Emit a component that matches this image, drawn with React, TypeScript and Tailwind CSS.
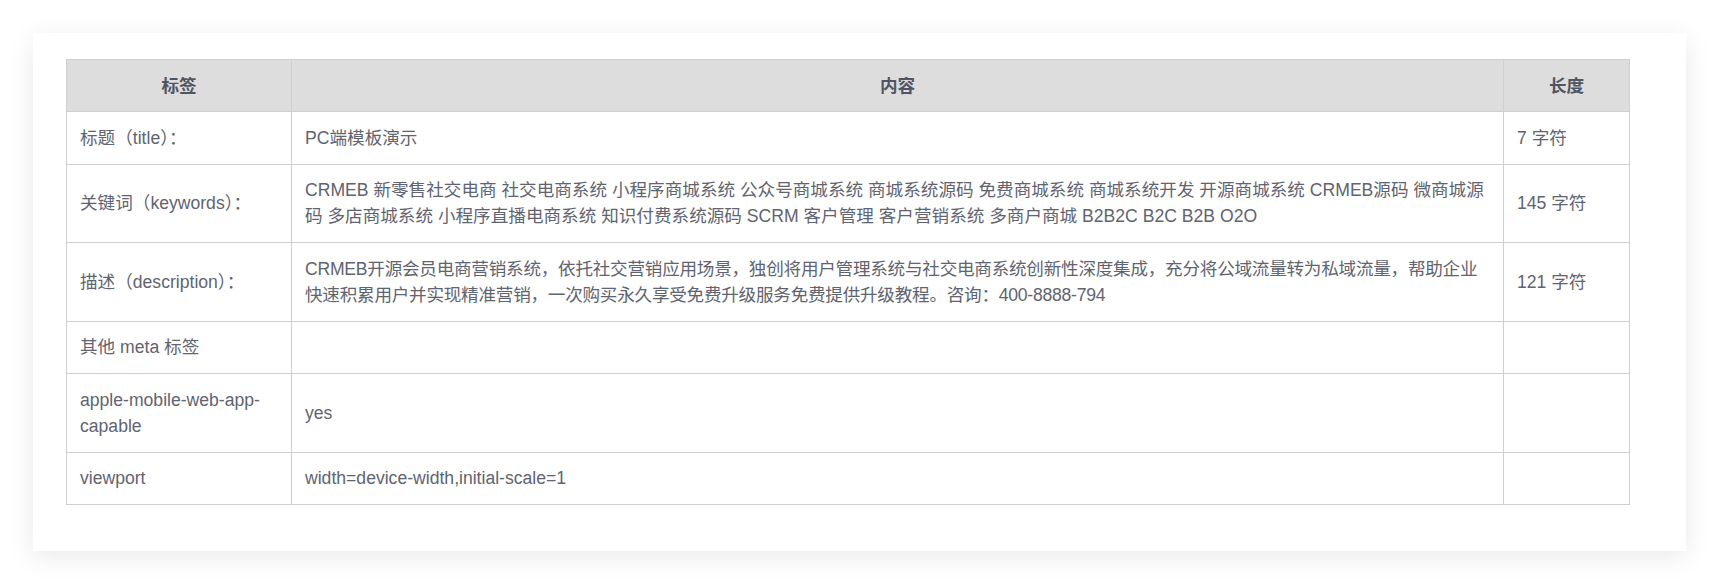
import React from "react";

type Row = { label: string; content: string; length: string; tight?: boolean };

const ROWS: Row[] = [
  { label: "标题（title）：", content: "PC端模板演示", length: "7 字符" },
  {
    label: "关键词（keywords）：",
    content:
      "CRMEB 新零售社交电商 社交电商系统 小程序商城系统 公众号商城系统 商城系统源码 免费商城系统 商城系统开发 开源商城系统 CRMEB源码 微商城源码 多店商城系统 小程序直播电商系统 知识付费系统源码 SCRM 客户管理 客户营销系统 多商户商城 B2B2C B2C B2B O2O",
    length: "145 字符",
  },
  {
    label: "描述（description）：",
    content:
      "CRMEB开源会员电商营销系统，依托社交营销应用场景，独创将用户管理系统与社交电商系统创新性深度集成，充分将公域流量转为私域流量，帮助企业快速积累用户并实现精准营销，一次购买永久享受免费升级服务免费提供升级教程。咨询：400-8888-794",
    length: "121 字符",
    tight: true,
  },
  { label: "其他 meta 标签", content: "", length: "" },
  { label: "apple-mobile-web-app-capable", content: "yes", length: "" },
  { label: "viewport", content: "width=device-width,initial-scale=1", length: "" },
];

const border = "border border-[#cfcfcf] px-[13px] align-middle";

export default function App() {
  return (
    <div
      className="min-h-[583px] bg-white pl-[33px] pt-[33px] text-[#5f6470]"
      style={{ fontFamily: '"Liberation Sans", "Noto Sans CJK SC", Arial, sans-serif' }}
    >
      <div className="w-[1653px] bg-white pl-[33px] pt-[26px] pb-[46px] shadow-[0_6px_26px_rgba(0,0,0,0.09)]">
        <table className="w-[1563px] table-fixed border-collapse text-[17.6px] leading-[26px]">
          <colgroup>
            <col className="w-[225px]" />
            <col className="w-[1212px]" />
            <col className="w-[126px]" />
          </colgroup>
          <thead>
            <tr className="bg-[#dddddd]">
              <th className={`${border} py-[12.5px] text-center font-bold text-[#4f5562]`}>标签</th>
              <th className={`${border} py-[12.5px] text-center font-bold text-[#4f5562]`}>内容</th>
              <th className={`${border} py-[12.5px] text-center font-bold text-[#4f5562]`}>长度</th>
            </tr>
          </thead>
          <tbody>
            {ROWS.map((r) => (
              <tr key={r.label}>
                <td className={`${border} py-[12.75px]`}>{r.label}</td>
                <td className={`${border} py-[12.75px] ${r.tight ? "tracking-[-0.25px]" : ""}`}>
                  {r.content}
                </td>
                <td className={`${border} py-[12.75px]`}>{r.length}</td>
              </tr>
            ))}
          </tbody>
        </table>
      </div>
    </div>
  );
}
